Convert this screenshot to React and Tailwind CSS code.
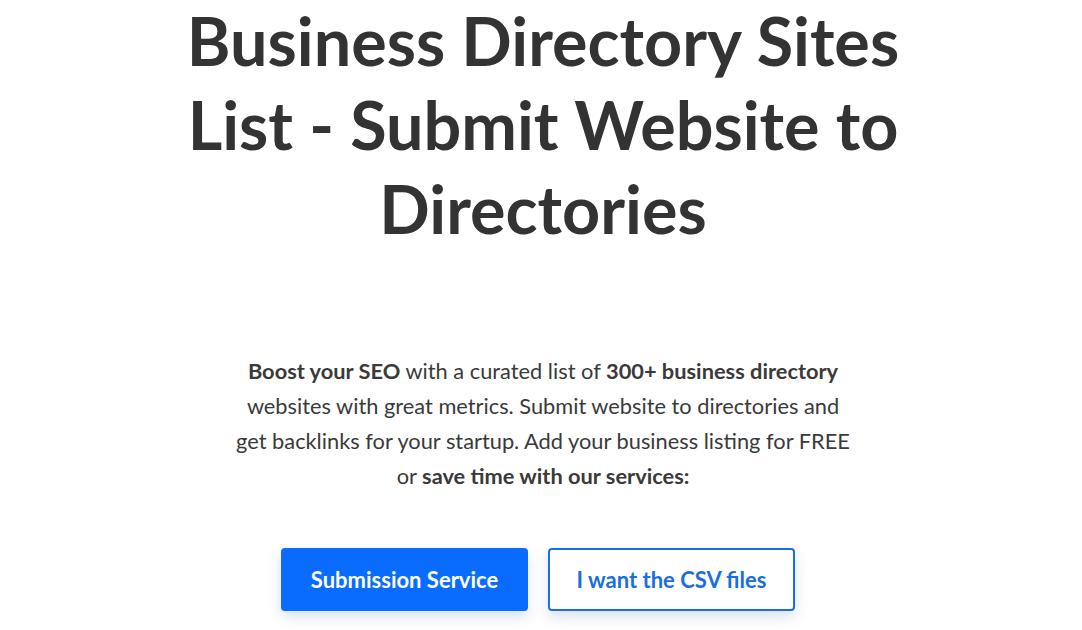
export default function App() {
  return (
    <div className="min-h-[630px] w-full bg-white text-[#333] flex flex-col items-center" style={{ fontFamily: 'Lato, "Noto Sans", sans-serif' }}>
      <h1 className="ml-[4px] mt-[-2px] w-[760px] text-center text-[66.5px] leading-[84px] font-bold text-[#333]">
        Business Directory Sites List - Submit Website to Directories
      </h1>
      <p className="ml-[4px] mt-[103px] w-[622px] text-center text-[21.8px] leading-[35px] text-[#3a3a3a]">
        <strong className="font-bold">Boost your SEO</strong> with a curated list of{' '}
        <strong className="font-bold">300+ business directory</strong> websites with great metrics. Submit website to directories and get backlinks for your startup. Add your business listing for FREE or{' '}
        <strong className="font-bold">save time with our services:</strong>
      </p>
      <div className="ml-[-6px] mt-[55px] flex gap-[20px]">
        <a className="flex h-[63px] w-[247px] items-center justify-center rounded-[4px] bg-[#0a6cff] text-[22px] font-bold text-white shadow-[0_6px_14px_rgba(10,60,140,0.15)]">
          Submission Service
        </a>
        <a className="flex h-[63px] w-[247px] items-center justify-center rounded-[4px] border-2 border-[#1a6fe0] bg-white text-[22px] font-bold text-[#1a6fe0] shadow-[0_6px_14px_rgba(10,60,140,0.15)]">
          I want the CSV files
        </a>
      </div>
    </div>
  );
}
